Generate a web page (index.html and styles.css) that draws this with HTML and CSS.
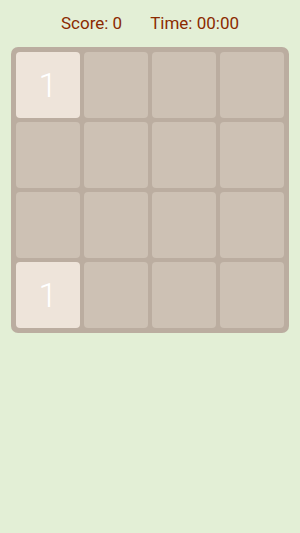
FILE: index.html
```html
<!DOCTYPE html>
<html lang="en">
<head>
    <meta charset="UTF-8">
    <meta name="viewport" content="width=device-width, initial-scale=1.0">
    <title>2048</title>
    <link rel="stylesheet" href="styles.css">
</head>
<body>
    <div class="status">
        <span class="score">Score: 0</span>
        <span class="time">Time: 00:00</span>
    </div>
    <div class="board">
        <div class="tile filled">1</div>
        <div class="tile"></div>
        <div class="tile"></div>
        <div class="tile"></div>
        <div class="tile"></div>
        <div class="tile"></div>
        <div class="tile"></div>
        <div class="tile"></div>
        <div class="tile"></div>
        <div class="tile"></div>
        <div class="tile"></div>
        <div class="tile"></div>
        <div class="tile filled">1</div>
        <div class="tile"></div>
        <div class="tile"></div>
        <div class="tile"></div>
    </div>
</body>
</html>
```
FILE: styles.css
```css
html, body {
    height: 100%;
}
body {
    margin: 0;
    background-color: #e3efd6;
    font-family: Roboto, "Noto Sans", sans-serif;
}
.status {
    display: flex;
    justify-content: center;
    gap: 28px;
    padding-top: 12px;
    height: 23px;
    font-size: 17px;
    line-height: 22px;
    color: #8b2a00;
}
.board {
    display: grid;
    grid-template-columns: repeat(4, 64px);
    grid-template-rows: repeat(4, 66px);
    gap: 4px;
    padding: 5px;
    margin: 12px 0 0 11px;
    width: 268px;
    background-color: #bbada0;
    border-radius: 7px;
}
.tile {
    background-color: #cdc1b4;
    border-radius: 4px;
    display: flex;
    align-items: center;
    justify-content: center;
    font-size: 34px;
    font-weight: 300;
    color: #fff;
}
.tile.filled {
    background-color: #eee4da;
}
```
